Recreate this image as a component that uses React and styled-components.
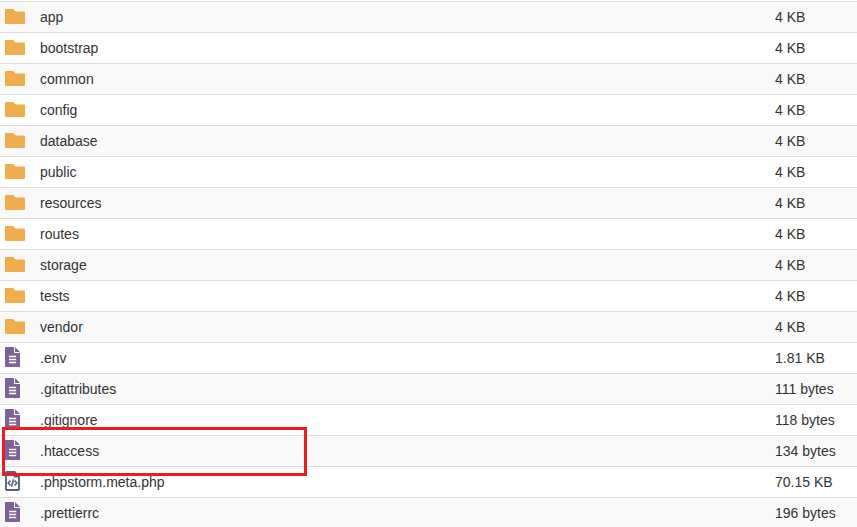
import React from "react";
import styled, { createGlobalStyle } from "styled-components";

const files = [
  { name: "app", size: "4 KB", type: "folder" },
  { name: "bootstrap", size: "4 KB", type: "folder" },
  { name: "common", size: "4 KB", type: "folder" },
  { name: "config", size: "4 KB", type: "folder" },
  { name: "database", size: "4 KB", type: "folder" },
  { name: "public", size: "4 KB", type: "folder" },
  { name: "resources", size: "4 KB", type: "folder" },
  { name: "routes", size: "4 KB", type: "folder" },
  { name: "storage", size: "4 KB", type: "folder" },
  { name: "tests", size: "4 KB", type: "folder" },
  { name: "vendor", size: "4 KB", type: "folder" },
  { name: ".env", size: "1.81 KB", type: "file" },
  { name: ".gitattributes", size: "111 bytes", type: "file" },
  { name: ".gitignore", size: "118 bytes", type: "file" },
  { name: ".htaccess", size: "134 bytes", type: "file", marked: true },
  { name: ".phpstorm.meta.php", size: "70.15 KB", type: "code" },
  { name: ".prettierrc", size: "196 bytes", type: "file" },
];

function FolderIcon() {
  return (
    <svg width="20" height="15" viewBox="0 0 20 15">
      <path d="M1 0H8.2L10.7 2.5H19Q20 2.5 20 3.5V14Q20 15 19 15H1Q0 15 0 14V1Q0 0 1 0Z" fill="#f0ad4e" />
    </svg>
  );
}

function FileIcon() {
  return (
    <svg width="15" height="20" viewBox="0 0 15 20">
      <path d="M.7 0H9V5.2Q9 6 9.8 6H15V19.3Q15 20 14.3 20H.7Q0 20 0 19.3V.7Q0 0 .7 0Z" fill="#7f6199" />
      <path d="M10 0L15 5H10Z" fill="#7f6199" />
      <path d="M4 9.6H11.2M4 12.5H11.2M4 15.4H11.2" stroke="#fff" strokeWidth="1.5" />
    </svg>
  );
}

function CodeIcon() {
  return (
    <svg width="15" height="20" viewBox="0 0 15 20" fill="none" stroke="#55637f">
      <path d="M1.8 1H9.5L14 5.5V18.2Q14 19 13.2 19H1.8Q1 19 1 18.2V1.8Q1 1 1.8 1Z" strokeWidth="1.9" />
      <path d="M9.6 1V5.5H14" strokeWidth="1.8" />
      <path d="M5.4 9.6L3.2 12L5.4 14.4M9.6 9.6L11.8 12L9.6 14.4M8.5 8.2L6.5 15.8" strokeWidth="1.6" />
    </svg>
  );
}

function Icon({ type }) {
  if (type === "folder") return <FolderIcon />;
  if (type === "code") return <CodeIcon />;
  return <FileIcon />;
}

export default function App() {
  return (
    <>
      <GlobalStyle />
      <FileList>
        {files.map((file) => (
          <Row key={file.name}>
            <IconCell $folder={file.type === "folder"}>
              <Icon type={file.type} />
            </IconCell>
            <Name>{file.name}</Name>
            <Size>{file.size}</Size>
            {file.marked && <Marker />}
          </Row>
        ))}
      </FileList>
    </>
  );
}

const GlobalStyle = createGlobalStyle`
  body {
    margin: 0;
    background: #fff;
    overflow: hidden;
  }
`;

const FileList = styled.ul`
  list-style: none;
  margin: 0;
  padding: 1px 0 0;
  height: 527px;
  box-sizing: border-box;
  overflow: hidden;
  font: 14px/20px "Liberation Sans", Arial, sans-serif;
  color: #333;
`;

const Row = styled.li`
  position: relative;
  display: grid;
  grid-template-columns: 40px 735px 1fr;
  align-items: center;
  height: 31px;
  box-sizing: border-box;
  border-top: 1px solid #ddd;
  background: #fff;

  &:nth-child(odd) {
    background: #f9f9f9;
  }
`;

const IconCell = styled.span`
  display: flex;
  align-self: start;
  padding: ${({ $folder }) => ($folder ? "7px" : "4px")} 0 0 5px;
`;

const Name = styled.span`
  white-space: nowrap;
`;

const Size = styled.span`
  white-space: nowrap;
`;

/* red outline drawn over the row and its neighbours */
const Marker = styled.span`
  position: absolute;
  z-index: 1;
  top: -9px;
  left: 2px;
  width: 305px;
  height: 49px;
  box-sizing: border-box;
  border: 3px solid #ed1c24;
`;
